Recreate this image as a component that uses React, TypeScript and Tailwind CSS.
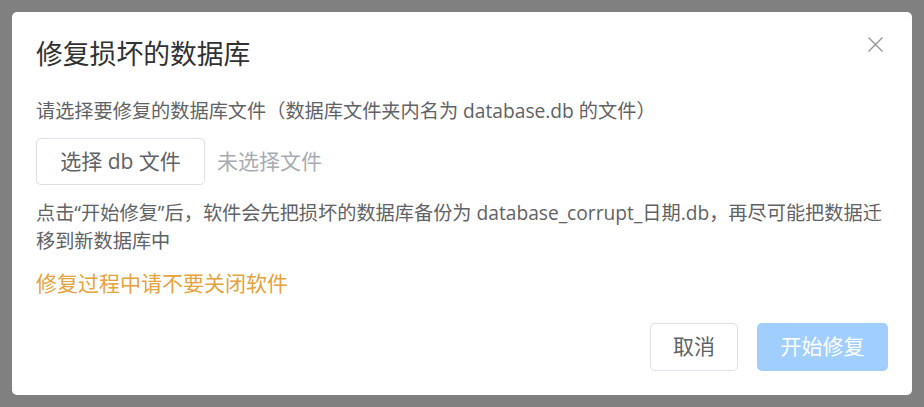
export default function App() {
  return (
    <div
      className="flex h-[407px] w-[924px] items-start justify-center bg-[#808080] pt-3"
      style={{ fontFamily: '"Open Sans", "Noto Sans CJK SC", sans-serif' }}
    >
      <div className="relative w-[900px] rounded-[5px] bg-white p-6">
        {/* close icon */}
        <button className="absolute right-[29px] top-[25px] flex h-[15px] w-[15px] items-center justify-center text-[#909399]">
          <svg width="15" height="15" viewBox="0 0 15 15" fill="none" stroke="currentColor" strokeWidth="1.3">
            <path d="M0.5 0.5L14.5 14.5M14.5 0.5L0.5 14.5" />
          </svg>
        </button>

        <h2 className="text-[26.8px] leading-9 text-[#303133]">修复损坏的数据库</h2>

        <p className="mt-[25px] text-[19.2px] leading-7 text-[#606266]">
          请选择要修复的数据库文件（数据库文件夹内名为 database.db 的文件）
        </p>

        <div className="mt-[13px] flex items-center gap-3">
          <button className="h-[47px] w-[169px] rounded-[5px] border border-[#dcdfe6] text-[21px] text-[#606266]">
            选择 db 文件
          </button>
          <span className="text-[21px] text-[#a8abb2]">未选择文件</span>
        </div>

        <p className="mt-[14px] text-[19.2px] leading-7 text-[#606266]">
          点击“开始修复”后，软件会先把损坏的数据库备份为 database_corrupt_日期.db，再尽可能把数据迁移到新数据库中
        </p>

        <p className="mt-[14px] text-[21px] leading-7 text-[#e6a23c]">修复过程中请不要关闭软件</p>

        <div className="mt-[26px] flex justify-end gap-[19px]">
          <button className="h-[48px] w-[88px] rounded-[5px] border border-[#dcdfe6] bg-white text-[21px] text-[#606266]">
            取消
          </button>
          <button className="h-[48px] w-[131px] rounded-[5px] bg-[#a0cfff] text-[21px] text-white">
            开始修复
          </button>
        </div>
      </div>
    </div>
  );
}
